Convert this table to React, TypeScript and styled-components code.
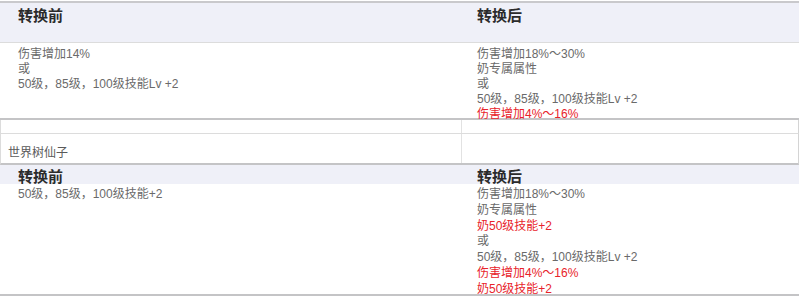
import React from 'react';
import styled, { createGlobalStyle } from 'styled-components';

const GlobalStyle = createGlobalStyle`
  body {
    margin: 0;
    background: #fff;
    font-family: 'Liberation Sans', 'Noto Sans CJK SC', sans-serif;
  }
`;

const Wrapper = styled.div`
  width: 799px;
  padding-top: 1px;
  box-sizing: border-box;
`;

const Row = styled.div<{ $h: number; $head?: boolean; $bottom?: 'thin' | 'thick'; $top?: boolean; $split?: boolean }>`
  display: grid;
  grid-template-columns: 460px 1fr;
  height: ${(p) => p.$h}px;
  background-color: ${(p) => (p.$head ? '#eff0f8' : '#fff')};
  border-top: ${(p) => (p.$top ? '2px solid #c9c9cc' : 'none')};
  border-bottom: ${(p) =>
    p.$bottom === 'thick' ? '2px solid #c4c4c6' : p.$bottom === 'thin' ? '1px solid #dcdcdc' : 'none'};
  border-left: ${(p) => (p.$split ? '1px solid #dcdcdc' : 'none')};
  border-right: ${(p) => (p.$split ? '1px solid #d4d4d4' : 'none')};
  box-sizing: content-box;

  > div + div {
    border-left: ${(p) => (p.$split ? '1px solid #e2e2e2' : 'none')};
  }
`;

const HeadCell = styled.div<{ $pt: number; $pl: number }>`
  padding: ${(p) => p.$pt}px 0 0 ${(p) => p.$pl}px;
  font-size: 15px;
  font-weight: 700;
  color: #2b2b2b;
  line-height: 18px;
`;

const Cell = styled.div<{ $pl: number; $lh: number; $pt: number }>`
  padding: ${(p) => p.$pt}px 0 0 ${(p) => p.$pl}px;
  font-size: 12px;
  line-height: ${(p) => p.$lh}px;
  color: #6a6a6a;
`;

const NameCell = styled.div`
  display: flex;
  align-items: center;
  padding: 5px 0 0 7px;
  font-size: 12px;
  color: #5a5a5a;
`;

const Line = styled.p<{ $red?: boolean }>`
  margin: 0;
  white-space: nowrap;
  color: ${(p) => (p.$red ? '#e8232a' : 'inherit')};
`;

type Item = { text: string; red?: boolean };

const Lines = ({ items }: { items: Item[] }) => (
  <>
    {items.map((it, i) => (
      <Line key={i} $red={it.red}>
        {it.text}
      </Line>
    ))}
  </>
);

const before1: Item[] = [{ text: '伤害增加14%' }, { text: '或' }, { text: '50级，85级，100级技能Lv +2' }];

const after1: Item[] = [
  { text: '伤害增加18%～30%' },
  { text: '奶专属属性' },
  { text: '或' },
  { text: '50级，85级，100级技能Lv +2' },
  { text: '伤害增加4%～16%', red: true },
];

const before2: Item[] = [{ text: '50级，85级，100级技能+2' }];

const after2: Item[] = [
  { text: '伤害增加18%～30%' },
  { text: '奶专属属性' },
  { text: '奶50级技能+2', red: true },
  { text: '或' },
  { text: '50级，85级，100级技能Lv +2' },
  { text: '伤害增加4%～16%', red: true },
  { text: '奶50级技能+2', red: true },
];

const App = () => (
  <>
    <GlobalStyle />
    <Wrapper>
      <Row $h={39} $head $top $bottom="thin">
        <HeadCell $pt={4} $pl={18}>转换前</HeadCell>
        <HeadCell $pt={4} $pl={17}>转换后</HeadCell>
      </Row>
      <Row $h={75} $bottom="thick">
        <Cell $pt={4} $pl={18} $lh={15}>
          <Lines items={before1} />
        </Cell>
        <Cell $pt={4} $pl={17} $lh={15}>
          <Lines items={after1} />
        </Cell>
      </Row>
      <Row $h={13} $bottom="thin" $split>
        <div />
        <div />
      </Row>
      <Row $h={29} $bottom="thick" $split>
        <NameCell>世界树仙子</NameCell>
        <div />
      </Row>
      <Row $h={19} $head>
        <HeadCell $pt={3} $pl={18}>转换前</HeadCell>
        <HeadCell $pt={3} $pl={17}>转换后</HeadCell>
      </Row>
      <Row $h={110} $bottom="thick">
        <Cell $pt={3} $pl={18} $lh={15.8}>
          <Lines items={before2} />
        </Cell>
        <Cell $pt={3} $pl={17} $lh={15.8}>
          <Lines items={after2} />
        </Cell>
      </Row>
    </Wrapper>
  </>
);

export default App;
